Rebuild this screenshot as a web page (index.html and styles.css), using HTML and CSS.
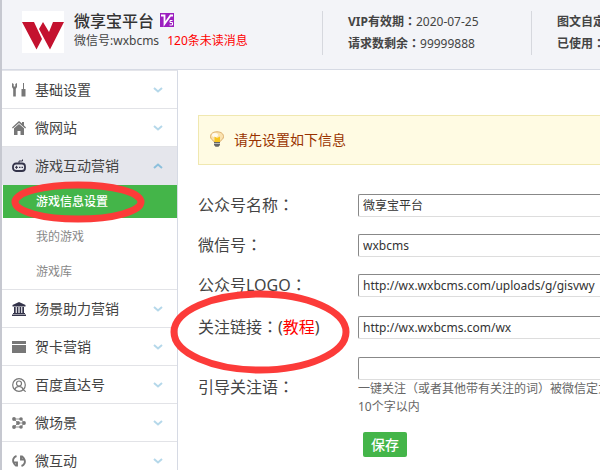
FILE: index.html
```html
<!DOCTYPE html>
<html lang="zh-CN">
<head>
    <meta charset="UTF-8">
    <title>微享宝平台</title>
    <link rel="stylesheet" href="styles.css">
</head>
<body>
    <header class="header">
        <div class="brand">
            <svg class="logo" viewBox="0 0 42 42">
                <rect width="42" height="42" fill="#fff"/>
                <path fill="#c4122f" d="M0 11h12l8 17-5.500 10.500zM17 18l4-7 6 10 4-10h11L28 38.500z"/>
            </svg>
            <div>
                <div class="brand-name">
                    <strong>微享宝平台</strong>
                    <svg class="vip" viewBox="0 0 14 14">
                        <rect width="14" height="14" fill="#9c1fc0"/>
                        <path fill="none" stroke="#fff" stroke-width="1.800" d="M1 2.500h3.500V11l6-8.500H13"/>
                        <path fill="none" stroke="#fff" d="M12.500 7.500H10v2h2.500v2.500H9.500"/>
                    </svg>
                </div>
                <div class="account">微信号:wxbcms <a class="unread" href="#">120条未读消息</a></div>
            </div>
        </div>
        <div class="stat">
            <div><b>VIP有效期<span class="colon" lang="zh-TW">：</span></b>2020-07-25</div>
            <div><b>请求数剩余<span class="colon" lang="zh-TW">：</span></b>99999888</div>
        </div>
        <div class="stat">
            <div><b>图文自定</b></div>
            <div><b>已使用<span class="colon" lang="zh-TW">：</span></b></div>
        </div>
    </header>

    <div class="page">
        <nav class="sidebar">
            <a class="menu" href="#">
                <svg class="icon" viewBox="0 0 14 14" fill="#777"><path d="M0 0l1.700 1v2.500h1.600V1L5 0v4L3.800 6v7.500H1.200V6L0 4zM11 0h1v6h1.500v7.500h-4V6H11z"/></svg>
                <span>基础设置</span>
                <svg class="arrow" viewBox="0 0 10 6"><path d="M1 1l4 3.500L9 1"/></svg>
            </a>
            <a class="menu" href="#">
                <svg class="icon" viewBox="0 0 14 14" fill="#777"><path d="M7 0l3 2.600V1h2v3.400l2 2-.8 1.200L7 2 .8 7.600 0 6.400z"/><path d="M7 3l5 4.300V14H8.500v-4h-3v4H2V7.300z"/></svg>
                <span>微网站</span>
                <svg class="arrow" viewBox="0 0 10 6"><path d="M1 1l4 3.500L9 1"/></svg>
            </a>
            <a class="menu open" href="#">
                <svg class="icon" viewBox="0 0 14 14"><rect x="1" y="4.500" width="12" height="7.500" rx="3" fill="none" stroke="#34344a" stroke-width="1.800"/><path d="M7 4V2h3.500V.5M3 8.300h3M4.500 6.800v3" fill="none" stroke="#34344a"/><path d="M7 7.700h1.500v1.300H7zM9.500 7.700H11v1.300H9.500z" fill="#34344a"/></svg>
                <span>游戏互动营销</span>
                <svg class="arrow" viewBox="0 0 10 6"><path d="M1 5l4-3.500L9 5"/></svg>
            </a>
            <div class="submenu">
                <a class="active" href="#">游戏信息设置
                    <svg class="mark mark-menu" viewBox="0 0 134 42"><ellipse cx="67" cy="21" rx="63" ry="17"/></svg>
                </a>
                <a href="#">我的游戏</a>
                <a href="#">游戏库</a>
            </div>
            <a class="menu" href="#">
                <svg class="icon" viewBox="0 0 14 14" fill="#34344a"><path d="M7 0l6.500 3v1.500H.5V3zM2 5h1.700v6H2zM4.800 5h1.600v6H4.800zM7.600 5h1.600v6H7.600zM10.300 5H12v6h-1.700zM1 11h12v1H1zM0 12.500h14V14H0z"/></svg>
                <span>场景助力营销</span>
                <svg class="arrow" viewBox="0 0 10 6"><path d="M1 1l4 3.500L9 1"/></svg>
            </a>
            <a class="menu" href="#">
                <svg class="icon" viewBox="0 0 14 14" fill="#777"><path d="M0 1h14v3H0zM0 5h14v8H0z"/></svg>
                <span>贺卡营销</span>
                <svg class="arrow" viewBox="0 0 10 6"><path d="M1 1l4 3.500L9 1"/></svg>
            </a>
            <a class="menu" href="#">
                <svg class="icon" viewBox="0 0 14 14" fill="none" stroke="#777" stroke-width="1.200"><circle cx="7" cy="7" r="6.300"/><circle cx="7" cy="5.500" r="2.500"/><path d="M2.800 11.500C3.500 9 5 8.500 7 8.500s3.500.5 4.200 3M10.500 11l3.200 2.700"/></svg>
                <span>百度直达号</span>
                <svg class="arrow" viewBox="0 0 10 6"><path d="M1 1l4 3.500L9 1"/></svg>
            </a>
            <a class="menu" href="#">
                <svg class="icon" viewBox="0 0 14 14" fill="#777"><path d="M2 3l4 4h6M2 11l4-4M2 3h7M2 11h7M9 3l3 4-3 4" fill="none" stroke="#777" stroke-width=".8"/><circle cx="2" cy="3" r="1.900"/><circle cx="9" cy="3" r="1.800"/><circle cx="6" cy="7" r="1.900"/><circle cx="12" cy="7" r="1.900"/><circle cx="2" cy="11" r="1.900"/><circle cx="9" cy="11" r="1.800"/></svg>
                <span>微场景</span>
                <svg class="arrow" viewBox="0 0 10 6"><path d="M1 1l4 3.500L9 1"/></svg>
            </a>
            <a class="menu" href="#">
                <svg class="icon" viewBox="0 0 14 14" fill="none" stroke="#777" stroke-width="1.900"><path d="M4.500 2C1.500 3 .5 6 1.500 8.500c.6 1.500 1.500 2.500 3 3.500M5 12.500V8.500H2M9.500 12c3-1 4-4 3-6.500-.6-1.500-1.500-2.500-3-3.500M9 1.500v4h3"/></svg>
                <span>微互动</span>
                <svg class="arrow" viewBox="0 0 10 6"><path d="M1 1l4 3.500L9 1"/></svg>
            </a>
        </nav>

        <main class="main">
            <div class="notice">
                <svg class="bulb" viewBox="0 0 16 16">
                    <path fill="#fbe3b0" stroke="#dcae6c" d="M8 .8c4 0 6.500 2 6.500 4.700 0 2.500-2 3.500-3.500 5H5C3.500 9 1.500 8 1.500 5.500 1.500 2.800 4 .8 8 .8z"/>
                    <ellipse cx="6" cy="4" rx="3" ry="2" fill="#fffaf0"/>
                    <path fill="#f7c51e" d="M5.500 5.500L8 7l3-1.500V11H5.500z"/>
                    <path fill="#666" d="M5 11h6v3l-1.500 1.700h-3L5 14z"/>
                    <path stroke="#bbb" d="M5 12.500h6"/>
                </svg>
                <span>请先设置如下信息</span>
            </div>
            <form class="form">
                <div class="row">
                    <label for="name">公众号名称<span class="colon" lang="zh-TW">：</span></label>
                    <input type="text" id="name" value="微享宝平台">
                </div>
                <div class="row">
                    <label for="wxid">微信号<span class="colon" lang="zh-TW">：</span></label>
                    <input type="text" id="wxid" value="wxbcms">
                </div>
                <div class="row">
                    <label for="logo">公众号LOGO<span class="colon" lang="zh-TW">：</span></label>
                    <input type="text" id="logo" value="http://wx.wxbcms.com/uploads/g/gisvwy">
                </div>
                <div class="row row-link">
                    <label for="link">关注链接<span class="colon" lang="zh-TW">：</span>(<a class="guide" href="#">教程</a>)</label>
                    <input type="text" id="link" value="http://wx.wxbcms.com/wx">
                    <svg class="mark mark-link" viewBox="0 0 180 84"><ellipse cx="90" cy="42" rx="86" ry="38"/></svg>
                </div>
                <div class="row">
                    <label for="words">引导关注语<span class="colon" lang="zh-TW">：</span></label>
                    <div class="field">
                        <input type="text" id="words">
                        <div class="help">一键关注<span class="colon" lang="zh-TW">（</span>或者其他带有关注的词<span class="colon" lang="zh-TW">）</span>被微信定为<br>10个字以内</div>
                    </div>
                </div>
                <button class="save" type="button">保存</button>
            </form>
        </main>
    </div>
</body>
</html>
```

FILE: styles.css
```css
* {
    box-sizing: border-box;
}
body {
    margin: 0;
    min-height: 100vh;
    border-left: 2px solid #c6c8d0;
    font-family: "Noto Sans", "Noto Sans CJK SC", sans-serif;
    font-size: 12px;
    color: #444;
    background: #fff;
    overflow: hidden;
    display: flex;
    flex-direction: column;
}
a {
    color: inherit;
    text-decoration: none;
}
.colon {
    font-family: "Noto Sans CJK TC", sans-serif;
    line-height: 1;
}

/* header */
.header {
    display: flex;
    height: 70px;
    padding: 11px 0 0 20px;
    background: #f3f4f8;
    border-bottom: 1px solid #d6dae4;
}
.brand {
    display: flex;
    flex: 0 0 300px;
    gap: 10px;
}
.logo {
    width: 42px;
    height: 42px;
}
.brand-name {
    display: flex;
    align-items: center;
    gap: 6px;
    height: 18px;
    font-size: 16px;
    color: #333;
}
.brand-name strong {
    font-weight: 500;
}
.vip {
    width: 14px;
    height: 14px;
}
.account {
    line-height: 24px;
}
.unread {
    margin-left: 5px;
    color: #f00;
}
.stat {
    flex: 0 0 209px;
    height: 44px;
    padding-left: 25px;
    border-left: 1px solid #d6d8de;
    line-height: 22px;
    white-space: nowrap;
}

/* left menu */
.page {
    display: flex;
    flex: 1;
}
.sidebar {
    flex: 0 0 176px;
    height: 400px;
    border-top: 1px solid #e4e5ea;
    border-right: 1px solid #d6dae4;
}
.menu {
    display: flex;
    align-items: center;
    height: 38px;
    padding: 0 14px 0 10px;
    border-bottom: 1px solid #e2e3e7;
    font-size: 14px;
}
.menu span {
    flex: 1;
    margin-left: 9px;
    padding-bottom: 2px;
}
.menu.open {
    background: #e5e6ec;
    border-bottom-color: #e5e6ec;
}
.icon {
    width: 14px;
    height: 14px;
}
.arrow {
    width: 10px;
    height: 6px;
    fill: none;
    stroke: #b5d8ea;
    stroke-width: 2;
}
.open .arrow {
    stroke: #8cc0dc;
}
.submenu {
    display: flex;
    flex-direction: column;
    gap: 2px;
    padding: 0 0 1px 1px;
    border-bottom: 1px solid #e2e3e7;
}
.submenu a {
    position: relative;
    height: 33px;
    padding-left: 33px;
    line-height: 33px;
    color: #888;
}
.submenu .active {
    color: #fff;
    font-weight: 500;
    background: #44b549;
}

/* red circles */
.mark {
    position: absolute;
    fill: none;
    stroke: #fc3b39;
    stroke-width: 7;
    pointer-events: none;
}
.mark-menu {
    left: 8px;
    top: -4px;
    width: 134px;
    height: 42px;
}
.mark-link {
    left: -28px;
    top: -15px;
    width: 180px;
    height: 84px;
}

/* content */
.main {
    flex: 1;
    min-width: 0;
    padding: 45px 0 0 20px;
}
.notice {
    display: flex;
    align-items: center;
    gap: 9px;
    height: 50px;
    padding: 0 0 2px 10px;
    border: 1px solid #f0e8b0;
    border-right: 0;
    background: #fffbe3;
    font-size: 14px;
    color: #993300;
}
.bulb {
    width: 16px;
    height: 16px;
}
.form {
    padding-top: 20px;
}
.row {
    position: relative;
    display: flex;
    align-items: center;
    min-height: 40px;
}
.row-link {
    min-height: 44px;
}
.row label {
    flex: 0 0 160px;
    padding-bottom: 2px;
    font-size: 16px;
}
.row input {
    flex: 1;
    min-width: 0;
    width: 100%;
    height: 23px;
    padding: 0 0 0 4px;
    border: 1px solid #ddd;
    border-top-color: #888;
    border-left-color: #888;
    border-right: 0;
    border-radius: 2px 0 0 2px;
    font-family: inherit;
    font-size: 12px;
    color: #333;
    background: #fff;
}
.field {
    flex: 1;
    min-width: 0;
    padding: 8px 0;
}
.field input {
    display: block;
}
.help {
    line-height: 18px;
    white-space: nowrap;
    color: #666;
}
.guide {
    color: #f00;
}
.save {
    display: block;
    width: 44px;
    height: 25px;
    margin: 8px 0 0 165px;
    padding: 0 0 2px;
    border: 0;
    border-radius: 2px;
    font-family: inherit;
    font-size: 14px;
    font-weight: 500;
    color: #fff;
    background: #44b549;
}
```
